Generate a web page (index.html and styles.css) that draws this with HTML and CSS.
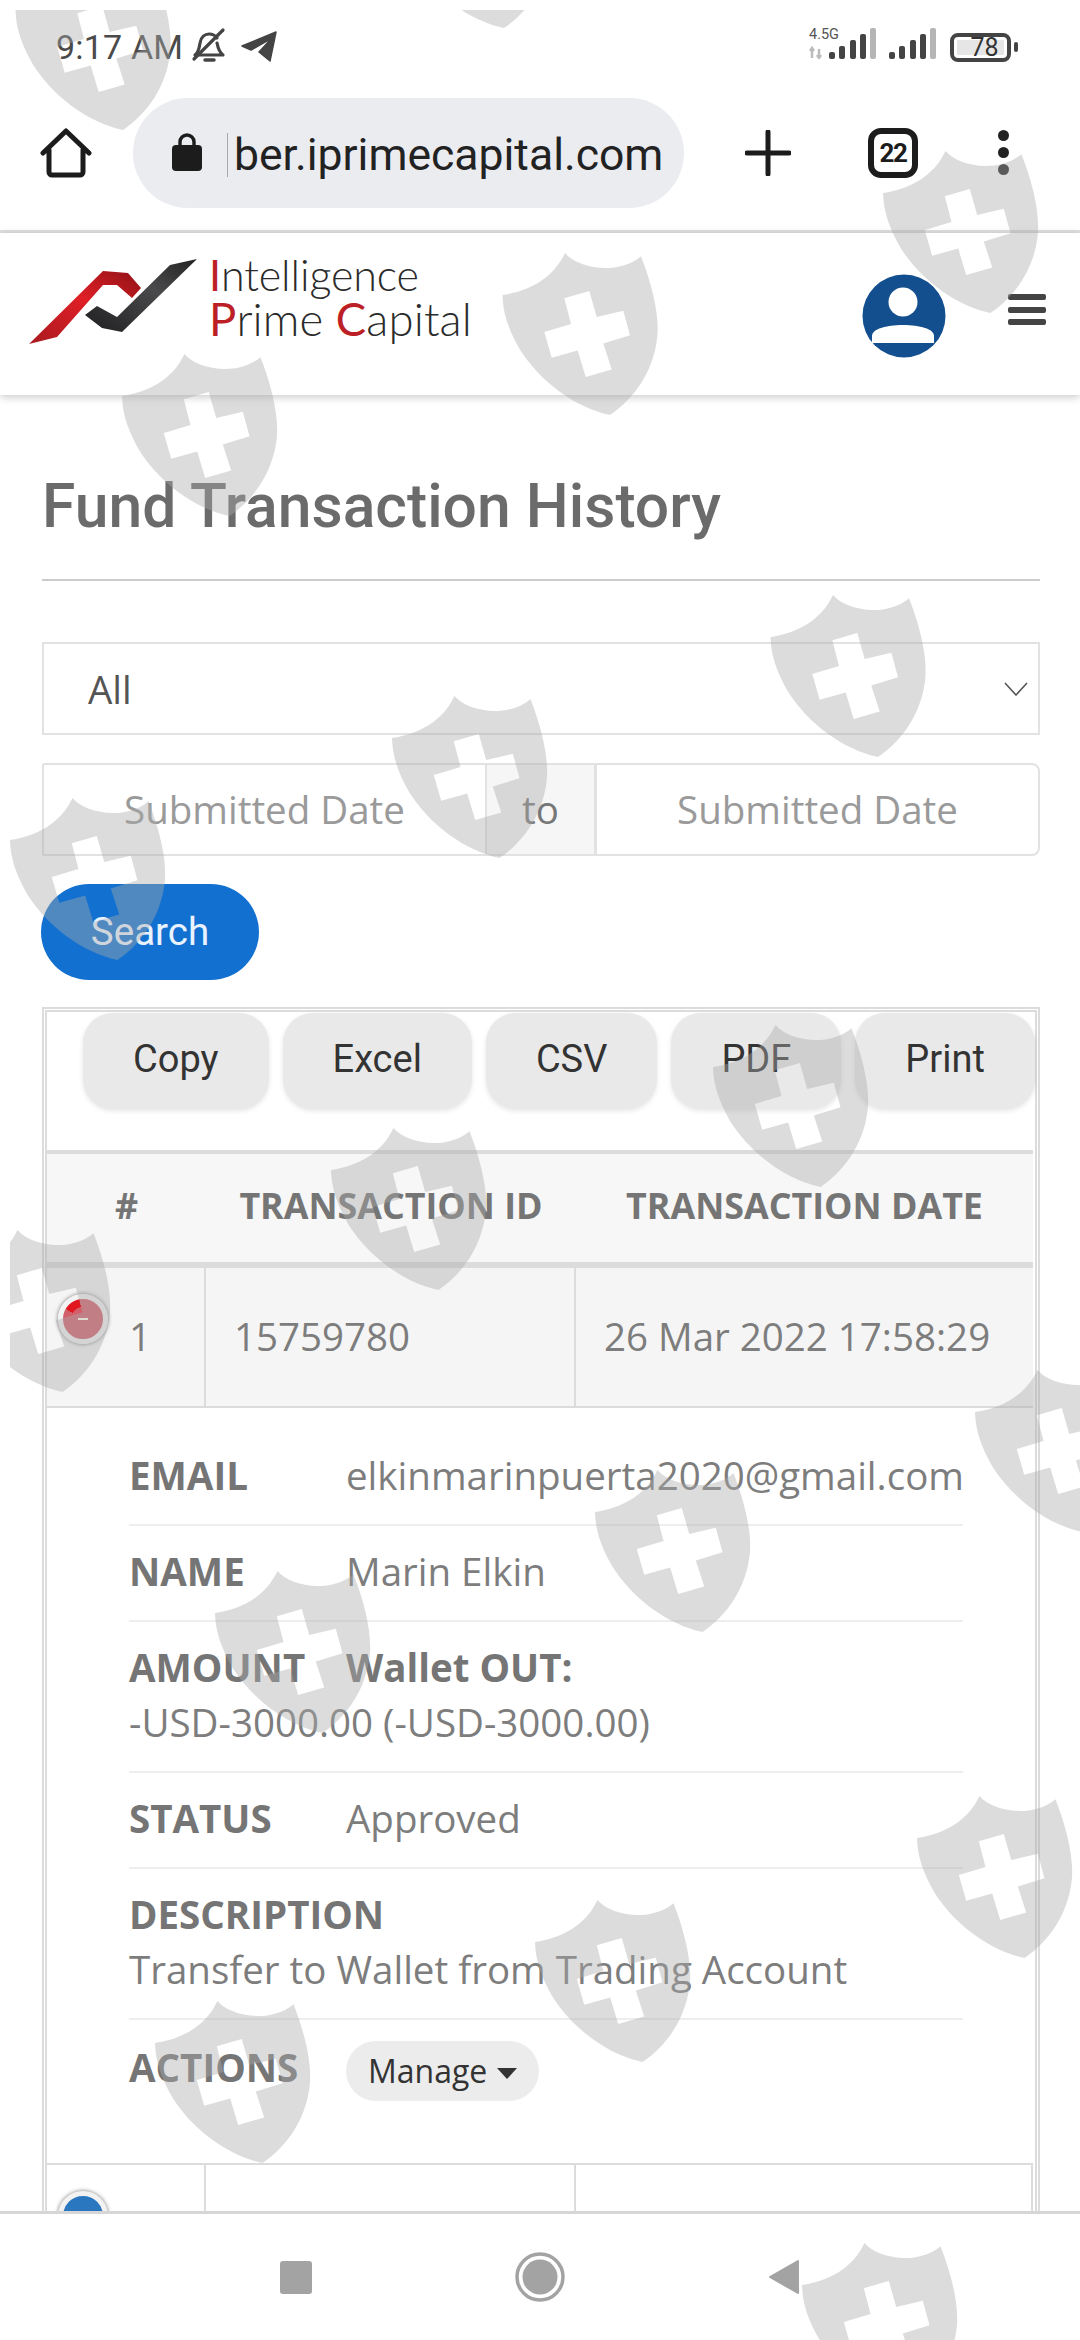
FILE: index.html
```html
<!DOCTYPE html>
<html lang="en">
<head>
<meta charset="utf-8">
<title>Fund Transaction History</title>
<link rel="stylesheet" href="styles.css">
</head>
<body>
<div class="screen">
  <div class="status">
    <div class="status-left">
      <span class="time">9:17 AM</span>
      <svg class="bell" viewBox="0 0 40 40" width="40" height="40"><path d="M6 28c4-3 4-7 5-12 1-6 5-9 9-9 3 0 6 1 8 4M28 16c1 5 2 9 6 12H10" fill="none" stroke="#444" stroke-width="3.2" stroke-linejoin="round" stroke-linecap="round"/><path d="M16 33h9" stroke="#444" stroke-width="3.5" stroke-linecap="round"/><path d="M5 32 34 3" stroke="#444" stroke-width="3.2" stroke-linecap="round"/></svg>
      <svg class="plane" viewBox="0 0 36 32" width="36" height="32"><path d="M1 15 35 1 29 30 18 21 31 7 10 19Z" fill="#444" stroke="#444" stroke-width="1.5" stroke-linejoin="round"/></svg>
    </div>
    <div class="status-right">
      <svg class="signal" viewBox="0 0 136 34" width="136" height="34">
        <text x="0" y="14" class="net">4.5G</text>
        <path d="M3 24v9M1 26l2-3 2 3M10 24v9M8 30l2 3 2-3" stroke="#bbb" stroke-width="2.5" fill="none"/>
        <g fill="#444"><rect x="20" y="27" width="6" height="7" rx="2"/><rect x="30" y="21" width="6" height="13" rx="2"/><rect x="41" y="15" width="6" height="19" rx="2"/><rect x="51" y="9" width="6" height="25" rx="2"/></g>
        <rect x="61" y="3" width="6" height="31" rx="2" fill="#b5b5b5"/>
        <g fill="#444"><rect x="80" y="27" width="6" height="7" rx="2"/><rect x="90" y="21" width="6" height="13" rx="2"/><rect x="101" y="15" width="6" height="19" rx="2"/><rect x="111" y="9" width="6" height="25" rx="2"/></g>
        <rect x="121" y="3" width="6" height="31" rx="2" fill="#b5b5b5"/>
      </svg>
      <div class="battery"><span class="battery-level">78</span></div>
      <span class="battery-nub"></span>
    </div>
  </div>

  <div class="browser">
    <svg class="home" viewBox="0 0 52 54" width="52" height="54"><path d="M3 27 26 5 49 27M9 24V46a3 3 0 0 0 3 3H40a3 3 0 0 0 3-3V24" fill="none" stroke="#1c1c1c" stroke-width="5" stroke-linecap="round" stroke-linejoin="round"/></svg>
    <div class="pill">
      <svg class="lock" viewBox="0 0 30 39" width="30" height="39"><path d="M8 16V10a7 7 0 0 1 14 0v6" fill="none" stroke="#1c1c1c" stroke-width="3.4"/><rect x="0" y="13" width="30" height="26" rx="4" fill="#1c1c1c"/></svg>
      <span class="url">ber.iprimecapital.com</span>
    </div>
    <svg class="plus" viewBox="0 0 46 46" width="46" height="46"><path d="M23 2V44M2 23H44" stroke="#1c1c1c" stroke-width="5" stroke-linecap="round"/></svg>
    <div class="tabs">22</div>
    <div class="dots"><i></i><i></i><i></i></div>
  </div>

  <header class="site-header">
    <div class="logo">
      <svg class="logo-mark" viewBox="0 0 170 88" width="170" height="88">
        <defs>
          <linearGradient id="lr" x1="0" y1="1" x2="1" y2="0"><stop offset="0" stop-color="#a81a1f"/><stop offset=".55" stop-color="#e01f26"/><stop offset="1" stop-color="#8e1216"/></linearGradient>
          <linearGradient id="ld" x1="0" y1="1" x2="1" y2="0"><stop offset="0" stop-color="#1e1e20"/><stop offset=".6" stop-color="#4a4a4c"/><stop offset="1" stop-color="#222"/></linearGradient>
        </defs>
        <polygon points="1,86 75,13 100,15 113,30 104,40 89,27 75,27 29,79" fill="url(#lr)"/>
        <polygon points="169,1 142,7 89,59 69,48 57,57 74,70 94,74" fill="url(#ld)"/>
      </svg>
      <div class="logo-text">
        <span class="logo-line first"><b>I</b>ntelligence</span>
        <span class="logo-line second"><b>P</b>rime <b>C</b>apital</span>
      </div>
    </div>
    <div class="header-actions">
      <svg class="avatar" viewBox="0 0 84 84" width="84" height="84"><circle cx="42" cy="42" r="41.5" fill="#134f8e"/><circle cx="41" cy="28" r="14.5" fill="#fff"/><path d="M10 69V62C10 55 24 51 41 51S72 55 72 62V69Z" fill="#fff"/></svg>
      <div class="burger"><i></i><i></i><i></i></div>
    </div>
  </header>

  <main class="page">
    <h1 class="title">Fund Transaction History</h1>
    <div class="select">
      <span>All</span>
      <svg viewBox="0 0 24 14" width="24" height="14"><path d="M1 1 12 13 23 1" fill="none" stroke="#555" stroke-width="1.6"/></svg>
    </div>
    <div class="dates">
      <div class="date-input">Submitted Date</div>
      <div class="date-to">to</div>
      <div class="date-input">Submitted Date</div>
    </div>
    <button class="search">Search</button>

    <section class="panel">
      <div class="panel-inner">
        <div class="tools">
          <span class="tool">Copy</span><span class="tool">Excel</span><span class="tool">CSV</span><span class="tool">PDF</span><span class="tool">Print</span>
        </div>
        <table class="grid">
          <colgroup><col class="c1"><col class="c2"><col class="c3"></colgroup>
          <thead>
            <tr><th>#</th><th>TRANSACTION ID</th><th>TRANSACTION DATE</th></tr>
          </thead>
          <tbody>
            <tr class="open">
              <td class="idx"><span class="toggle minus"><i></i></span>1</td>
              <td>15759780</td>
              <td>26 Mar 2022 17:58:29</td>
            </tr>
            <tr class="detail">
              <td colspan="3">
                <ul class="facts">
                  <li><span class="k">EMAIL</span>elkinmarinpuerta2020@gmail.com</li>
                  <li><span class="k">NAME</span>Marin Elkin</li>
                  <li><span class="k">AMOUNT</span><strong>Wallet OUT:</strong><br>-USD-3000.00 (-USD-3000.00)</li>
                  <li><span class="k">STATUS</span>Approved</li>
                  <li><span class="k">DESCRIPTION</span><br>Transfer to Wallet from Trading Account</li>
                  <li class="last"><span class="k">ACTIONS</span><span class="manage">Manage<i class="caret"></i></span></li>
                </ul>
              </td>
            </tr>
            <tr class="next">
              <td class="idx"><span class="toggle plus-btn"></span></td>
              <td></td>
              <td></td>
            </tr>
          </tbody>
        </table>
      </div>
    </section>
  </main>

  <nav class="nav">
    <span class="nav-square"></span>
    <svg viewBox="0 0 50 50" width="50" height="50"><circle cx="25" cy="25" r="23" fill="none" stroke="#a3a3a3" stroke-width="3.5"/><circle cx="25" cy="25" r="17.5" fill="#a3a3a3"/></svg>
    <svg viewBox="0 0 32 36" width="32" height="36"><path d="M30 2V34L2 18Z" fill="#a3a3a3" stroke="#a3a3a3" stroke-width="2" stroke-linejoin="round"/></svg>
  </nav>

  <div class="marks">
    <svg viewBox="10 10 1070 2330" width="1070" height="2330">
      <defs>
        <path id="shield" transform="translate(0 -8.4) scale(1 1.052)" fill-rule="evenodd" d="M7.5 48C35 44 58 32 70 8 82 22 122 30 146 11 158 40 165 70 162 90 158 120 140 146 115 162 80 155 45 130 25 100 13 80 8 65 7.5 48ZM69.3 50.9 94.3 44 101.7 68.9 128.3 62.9 135 86.2 108.3 94.1 116.7 118.7 90.7 125.9 82.7 100.7 56.7 107.6 49.3 83 76 75.5Z"/>
      </defs>
      <g class="mark-set">
        <use href="#shield" x="8" y="-32"/><use href="#shield" x="389" y="-134"/><use href="#shield" x="875.5" y="151"/>
        <use href="#shield" x="495" y="253"/><use href="#shield" x="114.5" y="354"/><use href="#shield" x="763" y="595"/>
        <use href="#shield" x="384.5" y="696"/><use href="#shield" x="2.5" y="798"/><use href="#shield" x="705.5" y="1025"/>
        <use href="#shield" x="323.5" y="1128"/><use href="#shield" x="-52.5" y="1230"/><use href="#shield" x="967.5" y="1370"/>
        <use href="#shield" x="587.5" y="1470"/><use href="#shield" x="207.5" y="1571"/><use href="#shield" x="909.5" y="1796"/>
        <use href="#shield" x="527.5" y="1900"/><use href="#shield" x="147.5" y="2001"/><use href="#shield" x="794.5" y="2243"/>
      </g>
    </svg>
  </div>
</div>
</body>
</html>
```

FILE: styles.css
```css
* { box-sizing: border-box; }
html, body { margin: 0; padding: 0; background: #fff; }
.screen {
  position: relative; width: 1080px; height: 2340px; overflow: hidden;
  display: flex; flex-direction: column; background: #fff;
  font-family: "Open Sans", "Liberation Sans", sans-serif; color: #777;
}

/* status bar */
.status { height: 98px; flex: none; display: flex; justify-content: space-between; align-items: center; padding: 0 62px 4px 56px; }
.status-left { display: flex; align-items: center; }
.time { font: 400 34px/40px Roboto, sans-serif; color: #4a4a4a; letter-spacing: .2px; }
.bell { margin-left: 6px; }
.plane { margin-left: 12px; }
.status-right { display: flex; align-items: center; }
.signal { display: block; margin-top: -10px; }
.net { font: 400 14.5px Roboto, sans-serif; fill: #555; }
.battery { width: 61px; height: 29px; margin-left: 5px; border: 4px solid #444; border-radius: 8px; padding: 3px; display: flex; }
.battery-level { flex: 1; background: #e6e6e6; font: 400 25px/15px Roboto, sans-serif; color: #333; text-align: center; border-radius: 1px; padding-left: 8px; }
.battery-nub { width: 4px; height: 10px; margin-left: 3px; background: #444; border-radius: 2px; }

/* browser bar */
.browser { height: 135px; flex: none; display: flex; align-items: flex-start; padding-left: 40px; border-bottom: 3px solid #e0e0e0; }
.home { margin-top: 28px; }
.pill { width: 551px; height: 110px; margin-left: 41px; border-radius: 55px; background: #ebecf0; display: flex; align-items: center; padding-left: 39px; }
.lock { margin-top: -4px; }
.url { margin: 4px 0 0 25px; padding-left: 6px; border-left: 1px solid #aaa; font: 400 44.5px/44px Roboto, sans-serif; color: #222; white-space: nowrap; }
.plus { margin: 32px 0 0 61px; }
.tabs { width: 50px; height: 50px; margin: 30px 0 0 77px; border: 6px solid #1c1c1c; border-radius: 13px; font: 700 26px/38px "Roboto", sans-serif; letter-spacing: -1.5px; color: #1c1c1c; text-align: center; }
.dots { margin: 32px 0 0 80px; display: flex; flex-direction: column; gap: 6px; }
.dots i { width: 11px; height: 11px; border-radius: 50%; background: #222; }

/* site header */
.site-header {
  position: relative; height: 162px; flex: none; display: flex; justify-content: space-between; align-items: flex-start;
  padding: 25px 34px 0 28px; background: #fff; box-shadow: 0 2px 8px rgba(0,0,0,.22);
}
.logo { display: flex; align-items: flex-start; }
.logo-mark { display: block; }
.logo-text { margin: -5px 0 0 11px; font: 300 44px/44px Lato, sans-serif; color: #2b2b2b; }
.logo-line { display: block; white-space: nowrap; }
.logo-line.first { font-size: 43px; letter-spacing: -.1px; }
.logo-line.second { font-size: 45.5px; letter-spacing: .1px; }
.logo-line b { font-weight: 400; color: #bd1f26; }
.header-actions { display: flex; align-items: flex-start; padding-top: 16px; }
.avatar { display: block; }
.burger { margin: 20px 0 0 62px; width: 38px; display: flex; flex-direction: column; gap: 6.5px; }
.burger i { height: 6px; border-radius: 2px; background: #444; }

/* page */
.page { flex: 1; min-height: 0; overflow: hidden; padding: 0 40px 0 42px; }
.title { margin: 0; height: 186px; padding-top: 74px; border-bottom: 2px solid #ccc; font: 500 60.6px/76px Roboto, sans-serif; color: #6b6b6b; white-space: nowrap; }
.select { margin-top: 61px; height: 93px; border: 2px solid #e2e2e2; padding: 0 10px 0 44px; display: flex; justify-content: space-between; align-items: center; font-size: 38.5px; color: #555; }
.dates { margin-top: 28px; height: 93px; display: flex; border: 2px solid #e2e2e2; border-radius: 2px 8px 8px 2px; font-size: 38.5px; }
.date-input { flex: 1; display: flex; justify-content: center; align-items: center; color: #9a9a9a; padding-bottom: 2px; }
.date-to { width: 112px; display: flex; align-items: center; padding: 0 0 2px 35px; background: #f6f6f6; border: solid #e2e2e2; border-width: 0 3px 0 2px; color: #777; }
.search { display: block; margin: 28px 0 0 -1px; width: 218px; height: 96px; border: 0; border-radius: 48px; background: #1270d0; font: 400 38.5px Roboto, sans-serif; color: #e9f3ff; padding: 0 0 2px; }

/* panel + table */
.panel { margin-top: 27px; height: 1210px; overflow: hidden; border: 2px solid #dcdcdc; border-bottom: 0; padding: 1px 1px 0; }
.panel-inner { height: 100%; border: solid #dcdcdc; border-width: 2px 2px 0; }
.tools { height: 138px; padding: 1px 0 0 36px; display: flex; gap: 14px; align-items: flex-start; }
.tool { height: 96px; padding: 0 50px; border-radius: 30px; background: #e9e9e9; box-shadow: 0 2px 5px rgba(0,0,0,.1); font: 400 38px/92px Roboto, sans-serif; color: #333; white-space: nowrap; }
.grid { width: 986px; border-collapse: separate; border-spacing: 0; table-layout: fixed; }
.c1 { width: 159px; } .c2 { width: 370px; } .c3 { width: 457px; }
.grid th { height: 118px; padding: 0 0 6px; background: #f7f7f7; border-top: 4px solid #dcdcdc; border-bottom: 6px solid #dcdcdc; font-size: 35.8px; font-weight: 700; color: #757575; white-space: nowrap; }
.open td { height: 140px; padding: 0 0 3px 28px; background: #f5f5f5; border-bottom: 2px solid #dcdcdc; font-size: 38.5px; color: #7d7d7d; white-space: nowrap; }
.open td:not(:last-child), .next td:not(:last-child) { border-right: 2px solid #dcdcdc; }
.grid .idx { padding-left: 82px; position: relative; }
.toggle { position: absolute; left: 11px; top: 26px; width: 50px; height: 50px; border-radius: 50%; border: 5px solid #f2f2f2; box-shadow: 0 0 4px rgba(0,0,0,.55); }
.minus { background: radial-gradient(circle, #d2606a 0 42%, transparent 43%), conic-gradient(from 300deg, #e2161f 0 50deg, #d2606a 0); display: flex; align-items: center; justify-content: center; }
.minus i { width: 10px; height: 2px; background: #ffe; }
.detail td { padding: 22px 70px 0 82px; height: 755px; vertical-align: top; }
.facts { list-style: none; margin: 0; padding: 0; font-size: 38.5px; line-height: 55px; color: #7d7d7d; }
.facts li { padding: 18px 0 21px; border-bottom: 2px solid #eee; white-space: nowrap; }
.facts li.last { border: 0; padding-top: 20px; display: flex; align-items: flex-start; }
.k { display: inline-block; width: 217px; font-weight: 700; color: #757575; }
.facts strong { color: #757575; font-weight: 700; }
.manage { height: 60px; padding: 0 22px; margin-top: 1px; border-radius: 30px; background: #ececec; font-size: 32px; line-height: 56px; color: #333; display: flex; align-items: center; }
.caret { margin: 4px 0 0 10px; border: solid transparent; border-width: 11px 10px 0; border-top-color: #333; }
.next td { height: 140px; border-top: 2px solid #dcdcdc; }
.next td:last-child { border-right: 2px solid #dcdcdc; }
.plus-btn { background: #2a77c0; }

/* nav */
.nav { position: relative; height: 129px; flex: none; background: #fff; border-top: 3px solid #d6d6d6; display: flex; align-items: center; gap: 203px; padding: 0 0 0 280px; }
.nav-square { width: 32px; height: 33px; border-radius: 3px; background: #a3a3a3; }

/* watermark overlay */
.marks { position: absolute; left: 10px; top: 10px; width: 1070px; height: 2330px; overflow: hidden; pointer-events: none; }
.marks svg { display: block; }
.mark-set { fill: rgba(170,170,170,.41); }
```
